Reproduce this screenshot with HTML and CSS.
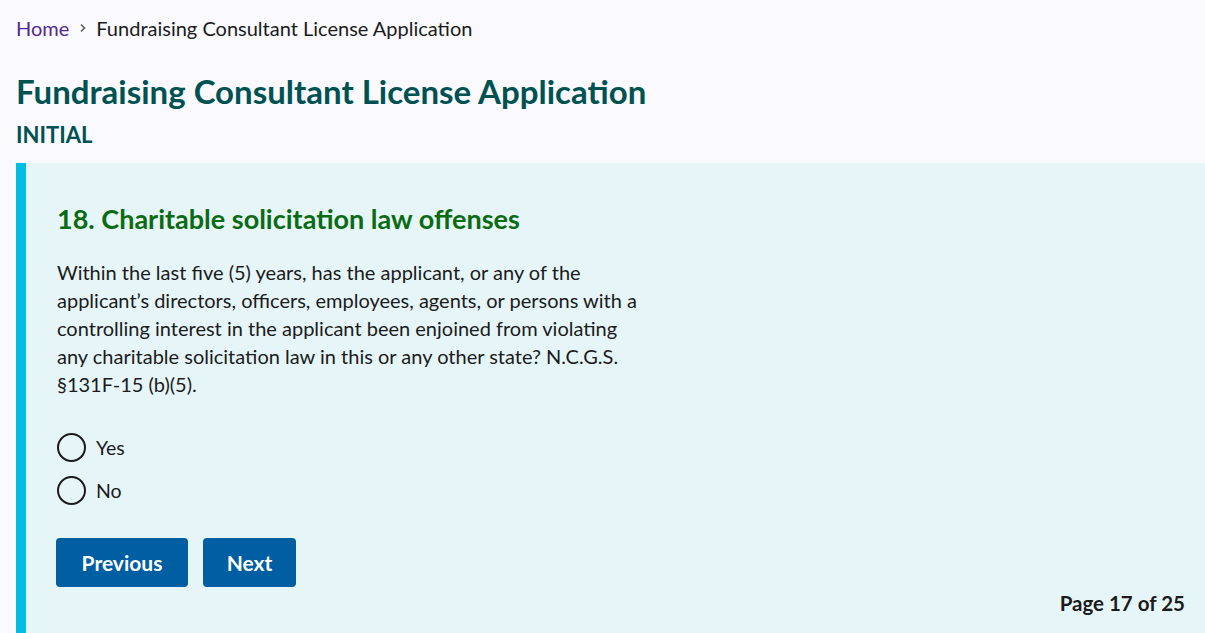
FILE: index.html
```html
<!DOCTYPE html>
<html lang="en">
<head>
<meta charset="utf-8">
<title>Fundraising Consultant License Application</title>
<link rel="stylesheet" href="styles.css">
</head>
<body>
<div class="page">
  <nav class="breadcrumb">
    <a class="crumb-link" href="#">Home</a>
    <svg class="chev" width="8" height="10" viewBox="0 0 8 10"><path d="M2 1.5 L5.5 5 L2 8.5" fill="none" stroke="#555" stroke-width="1.5"/></svg>
    <span class="crumb-current">Fundraising Consultant License Application</span>
  </nav>
  <h1 class="title">Fundraising Consultant License Application</h1>
  <div class="subtitle">INITIAL</div>
  <section class="panel">
    <h2 class="question">18. Charitable solicitation law offenses</h2>
    <p class="prompt">Within the last five (5) years, has the applicant, or any of the applicant’s directors, officers, employees, agents, or persons with a controlling interest in the applicant been enjoined from violating any charitable solicitation law in this or any other state? N.C.G.S. <span class="nowrap">§131F-15</span> (b)(5).</p>
    <div class="options">
      <label class="option"><span class="radio"></span><span class="opt-label">Yes</span></label>
      <label class="option"><span class="radio"></span><span class="opt-label">No</span></label>
    </div>
    <div class="actions">
      <button class="btn btn-prev">Previous</button>
      <button class="btn btn-next">Next</button>
    </div>
    <div class="pager">Page 17 of 25</div>
  </section>
</div>
</body>
</html>
```
FILE: styles.css
```css
* { box-sizing: border-box; }
html, body { margin: 0; padding: 0; }
body {
  background: #f9f9fe;
  font-family: "Lato", "Open Sans", sans-serif;
  color: #1b1b1b;
  height: 633px;
  overflow: hidden;
}
.page {
  padding-left: 16px;
  display: flex;
  flex-direction: column;
  min-height: 633px;
}
.breadcrumb {
  display: flex;
  align-items: center;
  gap: 8px;
  padding-top: 15px;
  height: 41px;
  font-size: 20px;
  line-height: 24px;
}
.crumb-link { color: #54278f; text-decoration: none; }
.crumb-current { color: #1b1b1b; }
.chev { margin: 0 1px 0 2px; }
.title {
  margin: 32px 0 0;
  font-size: 33px;
  line-height: 36px;
  font-weight: 700;
  color: #005151;
}
.subtitle {
  margin-top: 13px;
  font-size: 22px;
  line-height: 26px;
  font-weight: 700;
  color: #005151;
}
.panel {
  flex: 1;
  margin-top: 15px;
  background: #e6f6f8;
  border-left: 10px solid #00bde3;
  padding: 41px 20px 12px 31px;
  display: flex;
  flex-direction: column;
}
.question {
  margin: 0;
  font-size: 27px;
  line-height: 30px;
  font-weight: 700;
  color: #0b6b12;
}
.prompt {
  margin: 24px 0 0;
  max-width: 590px;
  font-size: 20px;
  line-height: 28px;
  color: #1b1b1b;
}
.nowrap { white-space: nowrap; }
.options {
  margin-top: 35px;
  display: flex;
  flex-direction: column;
  gap: 14px;
}
.option {
  display: flex;
  align-items: center;
  gap: 10px;
  font-size: 19.5px;
  line-height: 29px;
  color: #1b1b1b;
}
.radio {
  width: 29px;
  height: 29px;
  border-radius: 50%;
  border: 2px solid #1b1b1b;
  background: transparent;
  flex: none;
}
.actions {
  margin-top: 33px;
  margin-left: -1px;
  display: flex;
  gap: 15px;
}
.btn {
  height: 49px;
  border: 0;
  border-radius: 4px;
  background: #005ea2;
  color: #fff;
  font-family: inherit;
  font-size: 21px;
  font-weight: 700;
  padding: 0;
}
.btn-prev { width: 132px; }
.btn-next { width: 93px; }
.pager {
  align-self: flex-end;
  margin-top: 4px;
  font-size: 20.5px;
  line-height: 24px;
  font-weight: 700;
  color: #1b1b1b;
}
```
